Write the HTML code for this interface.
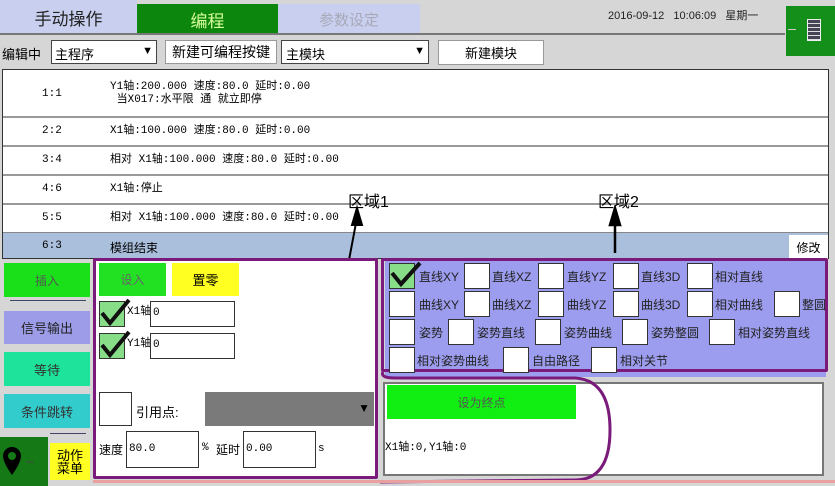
<!DOCTYPE html>
<html><head><meta charset="utf-8"><style>
*{box-sizing:border-box;margin:0;padding:0}
body{width:835px;height:486px;overflow:hidden;background:#d6d6d6;font-family:"Liberation Sans","Noto Sans CJK SC",sans-serif;position:relative;font-size:12px;color:#000}
.a{position:absolute}
.c{display:flex;align-items:center;justify-content:center}
.mono{font-family:"Liberation Mono","Noto Sans CJK SC",monospace;font-size:11px;line-height:13px}
.cb{position:absolute;width:26px;height:26px;background:#fff;border:1px solid #333}
.cbk{background:#88dd88}
.lbl{position:absolute;font-size:12px;color:#222}
</style></head><body>
<div class="a c" style="left:0;top:0;width:137px;height:34px;background:#c9d0ef;font-size:17px;color:#222">手动操作</div>
<div class="a c" style="left:137px;top:4px;width:141px;height:30px;background:#0c860c;font-size:17px;color:#d8ff9a">编程</div>
<div class="a c" style="left:278px;top:4px;width:142px;height:30px;background:#c9d0ef;font-size:15px;color:#a8a8b8">参数设定</div>
<div class="a" style="left:0;top:33px;width:785px;height:2px;background:#777"></div>
<div class="a" style="left:608px;top:7px;font-size:11px;color:#222">2016-09-12&nbsp;&nbsp;&nbsp;10:06:09&nbsp;&nbsp;&nbsp;星期一</div>
<div class="a" style="left:786px;top:6px;width:49px;height:50px;background:#14901a"></div>
<div class="a" style="left:788px;top:29px;width:8px;height:1px;background:#ccc"></div>
<div class="a" style="left:807px;top:19px;width:14px;height:22px;border:1px solid #eee;background:#445;background-image:repeating-linear-gradient(0deg,#ddd 0 1px,transparent 1px 4px)"></div>
<div class="a" style="left:2px;top:44px;font-size:13px">编辑中</div>
<div class="a" style="left:51px;top:40px;width:106px;height:24px;background:#fff;border:1px solid #444;font-size:13px;padding:3px 0 0 3px">主程序<span style="position:absolute;right:3px;top:4px;font-size:11px">▼</span></div>
<div class="a c" style="left:165px;top:40px;width:112px;height:24px;background:#fff;border:1px solid #999;font-size:14px">新建可编程按键</div>
<div class="a" style="left:281px;top:40px;width:148px;height:24px;background:#fff;border:1px solid #444;font-size:13px;padding:3px 0 0 4px">主模块<span style="position:absolute;right:3px;top:4px;font-size:11px">▼</span></div>
<div class="a c" style="left:438px;top:40px;width:106px;height:25px;background:#fff;border:1px solid #999;font-size:13px">新建模块</div>
<div class="a" style="left:2px;top:69px;width:827px;height:190px;background:#fff;border:1px solid #333"></div>
<div class="a mono" style="left:42px;top:88px">1:1</div>
<div class="a mono" style="left:110px;top:81px">Y1轴:200.000 速度:80.0 延时:0.00<br>&nbsp;当X017:水平限 通 就立即停</div>
<div class="a" style="left:3px;top:116px;width:825px;height:2px;background:#999"></div>
<div class="a mono" style="left:42px;top:125px">2:2</div><div class="a mono" style="left:110px;top:125px">X1轴:100.000 速度:80.0 延时:0.00</div>
<div class="a" style="left:3px;top:145px;width:825px;height:2px;background:#999"></div>
<div class="a mono" style="left:42px;top:154px">3:4</div><div class="a mono" style="left:110px;top:154px">相对 X1轴:100.000 速度:80.0 延时:0.00</div>
<div class="a" style="left:3px;top:174px;width:825px;height:2px;background:#999"></div>
<div class="a mono" style="left:42px;top:183px">4:6</div><div class="a mono" style="left:110px;top:183px">X1轴:停止</div>
<div class="a" style="left:3px;top:203px;width:825px;height:2px;background:#999"></div>
<div class="a mono" style="left:42px;top:212px">5:5</div><div class="a mono" style="left:110px;top:212px">相对 X1轴:100.000 速度:80.0 延时:0.00</div>
<div class="a" style="left:3px;top:232px;width:825px;height:26px;background:#aabfdc;border-top:1px solid #888"></div>
<div class="a mono" style="left:42px;top:240px">6:3</div><div class="a" style="left:110px;top:239px;font-size:12px">模组结束</div>
<div class="a c" style="left:789px;top:235px;width:39px;height:24px;background:#fff;font-size:12px">修改</div>
<div class="a" style="left:348px;top:188px;font-size:16px">区域1</div>
<div class="a" style="left:598px;top:188px;font-size:16px">区域2</div>
<svg class="a" style="left:340px;top:205px" width="30" height="60"><path d="M17 3 L12 20 L22 20 Z M16 18 L9 55" stroke="#000" stroke-width="2" fill="#000"/></svg>
<svg class="a" style="left:600px;top:205px" width="30" height="60"><path d="M15 3 L10 20 L20 20 Z M15 18 L15 48" stroke="#000" stroke-width="2.5" fill="#000"/></svg>
<div class="a c" style="left:4px;top:263px;width:86px;height:34px;background:#19e019;color:#555;font-size:12px">插入</div>
<div class="a" style="left:10px;top:300px;width:76px;height:1px;background:#446"></div>
<div class="a c" style="left:4px;top:311px;width:86px;height:33px;background:#9c9ce8;color:#222;font-size:13px">信号输出</div>
<div class="a c" style="left:4px;top:352px;width:86px;height:34px;background:#1ee39a;color:#333;font-size:13px">等待</div>
<div class="a c" style="left:4px;top:394px;width:86px;height:34px;background:#33cccc;color:#333;font-size:13px">条件跳转</div>
<div class="a" style="left:50px;top:433px;width:36px;height:1px;background:#446"></div>
<div class="a" style="left:0;top:437px;width:48px;height:49px;background:#157a15"></div>
<svg class="a" style="left:2px;top:444px" width="44" height="36"><path d="M10 3a9 9 0 0 1 9 9c0 7-9 19-9 19S1 19 1 12a9 9 0 0 1 9-9z" fill="#000"/><circle cx="10" cy="12" r="4" fill="#157a15"/><path d="M24 18h8" stroke="#444"/></svg>
<div class="a c" style="left:50px;top:443px;width:40px;height:37px;background:#ffff22;font-size:13px;line-height:13px;text-align:center">动作<br>菜单</div>
<div class="a" style="left:93px;top:258px;width:285px;height:221px;background:#fff;border:3px solid #7a1a7a;border-radius:2px"></div>
<div class="a c" style="left:99px;top:263px;width:67px;height:33px;background:#22e022;color:#666;font-size:12px">设入</div>
<div class="a c" style="left:172px;top:263px;width:67px;height:33px;background:#ffff22;font-size:13px">置零</div>
<div class="cb cbk" style="left:99px;top:301px"></div>
<div class="cb cbk" style="left:99px;top:333px"></div>
<svg class="a" style="left:99px;top:296px" width="35" height="64"><path d="M3 17l8 10L30 4M3 49l8 10L30 36" stroke="#111" stroke-width="4" fill="none"/></svg>
<div class="a mono" style="left:127px;top:306px">X1轴</div>
<div class="a mono" style="left:127px;top:338px">Y1轴</div>
<div class="a mono" style="left:150px;top:301px;width:85px;height:26px;background:#fff;border:1px solid #333;padding:5px 2px">0</div>
<div class="a mono" style="left:150px;top:333px;width:85px;height:26px;background:#fff;border:1px solid #333;padding:5px 2px">0</div>
<div class="a" style="left:99px;top:392px;width:33px;height:34px;background:#fff;border:1px solid #333"></div>
<div class="a" style="left:136px;top:402px;font-size:13px">引用点:</div>
<div class="a" style="left:205px;top:392px;width:169px;height:34px;background:#7a7a7a"><span style="position:absolute;right:4px;top:9px;font-size:12px">▼</span></div>
<div class="a" style="left:99px;top:441px;font-size:12px">速度</div>
<div class="a mono" style="left:126px;top:431px;width:73px;height:37px;background:#fff;border:1px solid #333;padding:11px 2px">80.0</div>
<div class="a mono" style="left:202px;top:442px">%</div>
<div class="a" style="left:216px;top:441px;font-size:12px">延时</div>
<div class="a mono" style="left:243px;top:431px;width:73px;height:37px;background:#fff;border:1px solid #333;padding:11px 2px">0.00</div>
<div class="a mono" style="left:318px;top:443px">s</div>
<div class="a" style="left:385px;top:259px;width:441px;height:118px;background:#9d9df0"></div>
<div class="a" style="left:381px;top:258px;width:447px;height:114px;border:3px solid #7a1a7a;border-radius:2px"></div>
<div class="cb cbk" style="left:389px;top:263px"></div>
<svg class="a" style="left:389px;top:260px" width="36" height="30"><path d="M3 13l9 11L31 3" stroke="#111" stroke-width="4" fill="none"/></svg>
<div class="lbl" style="left:419px;top:268px">直线XY</div>
<div class="cb" style="left:464px;top:263px"></div><div class="lbl" style="left:492px;top:268px">直线XZ</div>
<div class="cb" style="left:538px;top:263px"></div><div class="lbl" style="left:567px;top:268px">直线YZ</div>
<div class="cb" style="left:613px;top:263px"></div><div class="lbl" style="left:641px;top:268px">直线3D</div>
<div class="cb" style="left:687px;top:263px"></div><div class="lbl" style="left:715px;top:268px">相对直线</div>
<div class="cb" style="left:389px;top:291px"></div><div class="lbl" style="left:419px;top:296px">曲线XY</div>
<div class="cb" style="left:464px;top:291px"></div><div class="lbl" style="left:492px;top:296px">曲线XZ</div>
<div class="cb" style="left:538px;top:291px"></div><div class="lbl" style="left:567px;top:296px">曲线YZ</div>
<div class="cb" style="left:613px;top:291px"></div><div class="lbl" style="left:641px;top:296px">曲线3D</div>
<div class="cb" style="left:687px;top:291px"></div><div class="lbl" style="left:715px;top:296px">相对曲线</div>
<div class="cb" style="left:774px;top:291px"></div><div class="lbl" style="left:802px;top:296px">整圆</div>
<div class="cb" style="left:389px;top:319px"></div><div class="lbl" style="left:419px;top:324px">姿势</div>
<div class="cb" style="left:448px;top:319px"></div><div class="lbl" style="left:477px;top:324px">姿势直线</div>
<div class="cb" style="left:535px;top:319px"></div><div class="lbl" style="left:564px;top:324px">姿势曲线</div>
<div class="cb" style="left:622px;top:319px"></div><div class="lbl" style="left:651px;top:324px">姿势整圆</div>
<div class="cb" style="left:709px;top:319px"></div><div class="lbl" style="left:738px;top:324px">相对姿势直线</div>
<div class="cb" style="left:389px;top:347px"></div><div class="lbl" style="left:417px;top:352px">相对姿势曲线</div>
<div class="cb" style="left:503px;top:347px"></div><div class="lbl" style="left:532px;top:352px">自由路径</div>
<div class="cb" style="left:591px;top:347px"></div><div class="lbl" style="left:620px;top:352px">相对关节</div>
<div class="a" style="left:383px;top:382px;width:441px;height:94px;background:#fff;border:2px solid #777"></div>
<div class="a c" style="left:387px;top:385px;width:189px;height:34px;background:#11ee11;color:#555;font-size:12px">设为终点</div>
<div class="a mono" style="left:385px;top:442px">X1轴:0,Y1轴:0</div>
<svg class="a" style="left:375px;top:370px" width="250" height="116"><path d="M8 2 Q5 8 20 8 L200 8 Q235 10 235 60 Q235 110 200 110 L5 112" stroke="#7a1a7a" stroke-width="3" fill="none"/></svg>
<div class="a" style="left:93px;top:480px;width:742px;height:3px;background:#e8a0a0"></div>
</body></html>
